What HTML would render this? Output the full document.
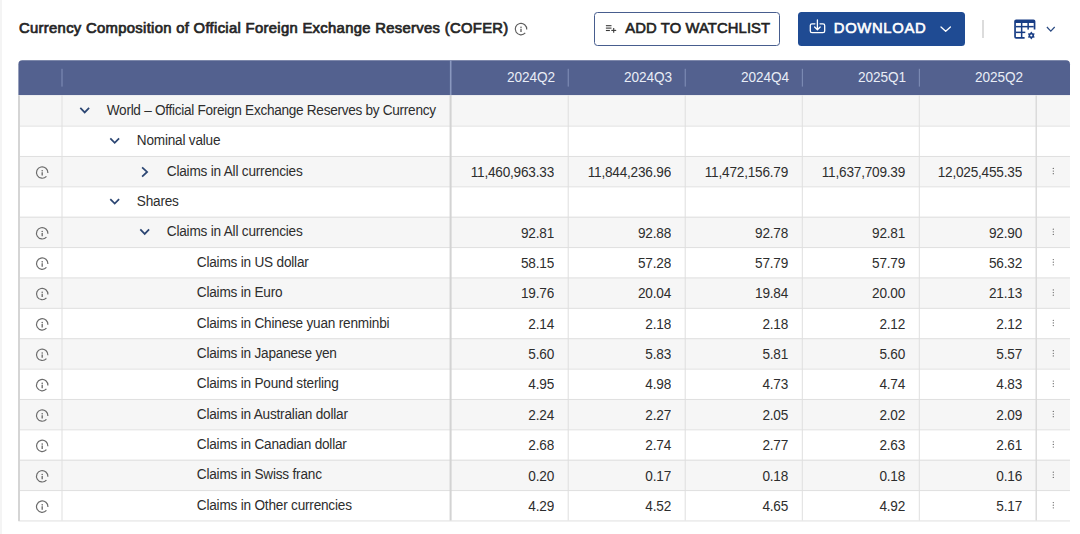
<!DOCTYPE html>
<html><head><meta charset="utf-8"><style>
*{margin:0;padding:0;box-sizing:border-box}
html,body{width:1080px;height:534px;overflow:hidden;background:#fff}
body{position:relative;font-family:"Liberation Sans",sans-serif;color:#2d2d2d}
.a{position:absolute}
.t{position:absolute;white-space:nowrap;font-size:13.6px;line-height:16px;letter-spacing:-0.2px}
.s{transform:scaleY(1.08);transform-origin:0 12.7px}
.num{text-align:right}
.hd{color:#e9edf6;font-size:13.6px;letter-spacing:-0.05px}
svg{position:absolute;overflow:visible}
</style></head>
<body>
<div class="a" style="left:0;top:0;width:1.5px;height:534px;background:#f4f4f4"></div>
<div class="t" style="left:19px;top:19.2px;font-size:14.8px;line-height:18px;font-weight:normal;-webkit-text-stroke:0.72px #262626;letter-spacing:0.32px;color:#262626">Currency Composition of Official Foreign Exchange Reserves (COFER)</div>
<svg style="left:0;top:0" width="1" height="1"><path d="M525.27 32.95 A5.75 5.75 0 1 1 526.74 29.50" fill="none" stroke="#5e5e5e" stroke-width="1.15"/><circle cx="521.0" cy="27.30" r="0.8" fill="#5e5e5e"/><line x1="521.0" y1="28.80" x2="521.0" y2="32.10" stroke="#5e5e5e" stroke-width="1.35"/></svg>
<div class="a" style="left:594px;top:12.1px;width:186.3px;height:34.3px;border:1.2px solid #475d8e;border-radius:3.5px;background:#fff"></div>
<svg style="left:0;top:0" width="1" height="1" stroke="#3a3a3a" stroke-width="1.1"><line x1="605.9" y1="25.7" x2="611.5" y2="25.7"/><line x1="605.9" y1="28.1" x2="611.5" y2="28.1"/><line x1="605.9" y1="30.5" x2="609.9" y2="30.5"/><line x1="611.3" y1="30.4" x2="616.2" y2="30.4"/><line x1="613.7" y1="27.9" x2="613.7" y2="32.8"/></svg>
<div class="t" style="left:625.3px;top:18.8px;font-size:14.8px;line-height:18px;font-weight:normal;-webkit-text-stroke:0.6px #222;letter-spacing:0.1px;color:#222">ADD TO WATCHLIST</div>
<div class="a" style="left:798px;top:12.1px;width:167px;height:34.2px;border-radius:3.5px;background:#1f4b93"></div>
<svg style="left:0;top:0" width="1" height="1" fill="none" stroke="#fff" stroke-width="1.3" stroke-linecap="round" stroke-linejoin="round"><path d="M814.9 23.8 H812 Q810.3 23.8 810.3 25.5 V31 Q810.3 32.7 812 32.7 H823 Q824.7 32.7 824.7 31 V25.5 Q824.7 23.8 823 23.8 H820"/><path d="M817.4 20 V29.5 M814.6 27 L817.4 29.8 L820.2 27"/><path d="M941 27 L945.7 31.3 L950.4 27"/></svg>
<div class="t" style="left:833.8px;top:18.9px;font-size:14.8px;line-height:18px;font-weight:normal;-webkit-text-stroke:0.6px #fff;letter-spacing:0.68px;color:#fff">DOWNLOAD</div>
<div class="a" style="left:982px;top:20px;width:1.5px;height:17.5px;background:#dcdcdc"></div>
<svg style="left:0;top:0" width="1" height="1" fill="#183d85"><path d="M1014.2 21.3 Q1014.2 19.4 1016.1 19.4 H1033.5 Q1035.4 19.4 1035.4 21.3 V29.6 H1033.7 V23.0 H1015.9 V37.0 H1024.6 V38.7 H1016.1 Q1014.2 38.7 1014.2 36.8 Z"/><rect x="1015.9" y="25.9" width="17.8" height="1.5"/><rect x="1015.9" y="31.6" width="9.4" height="1.5"/><rect x="1020.9" y="23" width="1.5" height="14.2"/><rect x="1027.4" y="23" width="1.5" height="6.6"/><polygon points="1031.30,31.60 1032.60,33.25 1034.68,33.55 1033.90,35.50 1034.68,37.45 1032.60,37.75 1031.30,39.40 1030.00,37.75 1027.92,37.45 1028.70,35.50 1027.92,33.55 1030.00,33.25"/><circle cx="1031.3" cy="35.5" r="1.1" fill="#fff"/></svg>
<svg style="left:0;top:0" width="1" height="1" fill="none" stroke="#2a4a82" stroke-width="1.2"><path d="M1046.9 27 L1050.8 31.2 L1054.7 27"/></svg>
<svg style="left:0;top:0" width="1080" height="534" shape-rendering="geometricPrecision"><path d="M18.4 95.3 V64.35 Q18.4 60.35 22.4 60.35 H1066.0 Q1070 60.35 1070 64.35 V95.3 Z" fill="#53618f"/><rect x="18.4" y="95.300" width="1051.6" height="30.375" fill="#f6f6f6"/><rect x="18.4" y="125.675" width="1051.6" height="30.375" fill="#ffffff"/><rect x="18.4" y="156.050" width="1051.6" height="30.375" fill="#f6f6f6"/><rect x="18.4" y="186.425" width="1051.6" height="30.375" fill="#ffffff"/><rect x="18.4" y="216.800" width="1051.6" height="30.375" fill="#f6f6f6"/><rect x="18.4" y="247.175" width="1051.6" height="30.375" fill="#ffffff"/><rect x="18.4" y="277.550" width="1051.6" height="30.375" fill="#f6f6f6"/><rect x="18.4" y="307.925" width="1051.6" height="30.375" fill="#ffffff"/><rect x="18.4" y="338.300" width="1051.6" height="30.375" fill="#f6f6f6"/><rect x="18.4" y="368.675" width="1051.6" height="30.375" fill="#ffffff"/><rect x="18.4" y="399.050" width="1051.6" height="30.375" fill="#f6f6f6"/><rect x="18.4" y="429.425" width="1051.6" height="30.375" fill="#ffffff"/><rect x="18.4" y="459.800" width="1051.6" height="30.375" fill="#f6f6f6"/><rect x="18.4" y="490.175" width="1051.6" height="30.375" fill="#ffffff"/><rect x="61.55" y="68.8" width="0.9" height="17.8" fill="#8896be"/><rect x="449.90" y="60.35" width="1.6" height="34.95" fill="#8a98bf"/><rect x="567.75" y="68.8" width="0.9" height="17.8" fill="#8896be"/><rect x="684.75" y="68.8" width="0.9" height="17.8" fill="#8896be"/><rect x="801.85" y="68.8" width="0.9" height="17.8" fill="#8896be"/><rect x="918.85" y="68.8" width="0.9" height="17.8" fill="#8896be"/><rect x="18.4" y="125.575" width="1051.6" height="1.0" fill="#dfdfdf"/><rect x="18.4" y="155.950" width="1051.6" height="1.0" fill="#dfdfdf"/><rect x="18.4" y="186.325" width="1051.6" height="1.0" fill="#dfdfdf"/><rect x="18.4" y="216.700" width="1051.6" height="1.0" fill="#dfdfdf"/><rect x="18.4" y="247.075" width="1051.6" height="1.0" fill="#dfdfdf"/><rect x="18.4" y="277.450" width="1051.6" height="1.0" fill="#dfdfdf"/><rect x="18.4" y="307.825" width="1051.6" height="1.0" fill="#dfdfdf"/><rect x="18.4" y="338.200" width="1051.6" height="1.0" fill="#dfdfdf"/><rect x="18.4" y="368.575" width="1051.6" height="1.0" fill="#dfdfdf"/><rect x="18.4" y="398.950" width="1051.6" height="1.0" fill="#dfdfdf"/><rect x="18.4" y="429.325" width="1051.6" height="1.0" fill="#dfdfdf"/><rect x="18.4" y="459.700" width="1051.6" height="1.0" fill="#dfdfdf"/><rect x="18.4" y="490.075" width="1051.6" height="1.0" fill="#dfdfdf"/><rect x="18.4" y="520.450" width="1051.6" height="1.0" fill="#dfdfdf"/><rect x="61.50" y="95.3" width="1.0" height="425.25" fill="#dfdfdf"/><rect x="567.70" y="95.3" width="1.0" height="425.25" fill="#dfdfdf"/><rect x="684.70" y="95.3" width="1.0" height="425.25" fill="#dfdfdf"/><rect x="801.80" y="95.3" width="1.0" height="425.25" fill="#dfdfdf"/><rect x="918.80" y="95.3" width="1.0" height="425.25" fill="#dfdfdf"/><rect x="1035.50" y="95.3" width="1.4" height="425.25" fill="#d9d9d9"/><rect x="449.60" y="95.3" width="2.0" height="425.25" fill="#d3d3d3"/><rect x="18.00" y="95.3" width="2.0" height="425.65" fill="#d5d5d5"/></svg>
<div class="t hd num s" style="left:455.0px;width:100px;top:70px">2024Q2</div>
<div class="t hd num s" style="left:572.0px;width:100px;top:70px">2024Q3</div>
<div class="t hd num s" style="left:689.0999999999999px;width:100px;top:70px">2024Q4</div>
<div class="t hd num s" style="left:806.0999999999999px;width:100px;top:70px">2025Q1</div>
<div class="t hd num s" style="left:923.0px;width:100px;top:70px">2025Q2</div>
<div class="t s" style="left:106.8px;top:102.90px;letter-spacing:-0.28px">World – Official Foreign Exchange Reserves by Currency</div>
<svg style="left:0;top:0" width="1" height="1" fill="none" stroke="#2c4673" stroke-width="1.75"><path d="M80.30 107.99 L84.70 112.39 L89.10 107.99"/></svg>
<div class="t s" style="left:136.8px;top:133.28px">Nominal value</div>
<svg style="left:0;top:0" width="1" height="1" fill="none" stroke="#2c4673" stroke-width="1.75"><path d="M110.30 138.36 L114.70 142.76 L119.10 138.36"/></svg>
<div class="t s" style="left:166.8px;top:163.65px">Claims in All currencies</div>
<svg style="left:0;top:0" width="1" height="1" fill="none" stroke="#2c4673" stroke-width="1.75"><path d="M142.10 167.34 L147.10 171.94 L142.10 176.54"/></svg>
<div class="t num s" style="left:434.0px;width:120px;top:164.75px">11,460,963.33</div>
<div class="t num s" style="left:551.0px;width:120px;top:164.75px">11,844,236.96</div>
<div class="t num s" style="left:668.0999999999999px;width:120px;top:164.75px">11,472,156.79</div>
<div class="t num s" style="left:785.0999999999999px;width:120px;top:164.75px">11,637,709.39</div>
<div class="t num s" style="left:902.0px;width:120px;top:164.75px">12,025,455.35</div>
<svg style="left:0;top:0" width="1" height="1"><path d="M46.44 176.35 A5.7 5.7 0 1 1 47.89 172.94" fill="none" stroke="#6b6b6b" stroke-width="1.2"/><circle cx="42.2" cy="170.74" r="0.8" fill="#6b6b6b"/><line x1="42.2" y1="172.24" x2="42.2" y2="175.54" stroke="#6b6b6b" stroke-width="1.35"/></svg>
<svg style="left:0;top:0" width="1" height="1" fill="#606060"><circle cx="1053.3" cy="168.44" r="0.64"/><circle cx="1053.3" cy="171.09" r="0.64"/><circle cx="1053.3" cy="173.69" r="0.64"/></svg>
<div class="t s" style="left:136.8px;top:194.03px">Shares</div>
<svg style="left:0;top:0" width="1" height="1" fill="none" stroke="#2c4673" stroke-width="1.75"><path d="M110.30 199.11 L114.70 203.51 L119.10 199.11"/></svg>
<div class="t s" style="left:166.8px;top:224.40px">Claims in All currencies</div>
<svg style="left:0;top:0" width="1" height="1" fill="none" stroke="#2c4673" stroke-width="1.75"><path d="M140.30 229.49 L144.70 233.89 L149.10 229.49"/></svg>
<div class="t num s" style="left:434.0px;width:120px;top:225.50px">92.81</div>
<div class="t num s" style="left:551.0px;width:120px;top:225.50px">92.88</div>
<div class="t num s" style="left:668.0999999999999px;width:120px;top:225.50px">92.78</div>
<div class="t num s" style="left:785.0999999999999px;width:120px;top:225.50px">92.81</div>
<div class="t num s" style="left:902.0px;width:120px;top:225.50px">92.90</div>
<svg style="left:0;top:0" width="1" height="1"><path d="M46.44 237.10 A5.7 5.7 0 1 1 47.89 233.69" fill="none" stroke="#6b6b6b" stroke-width="1.2"/><circle cx="42.2" cy="231.49" r="0.8" fill="#6b6b6b"/><line x1="42.2" y1="232.99" x2="42.2" y2="236.29" stroke="#6b6b6b" stroke-width="1.35"/></svg>
<svg style="left:0;top:0" width="1" height="1" fill="#606060"><circle cx="1053.3" cy="229.19" r="0.64"/><circle cx="1053.3" cy="231.84" r="0.64"/><circle cx="1053.3" cy="234.44" r="0.64"/></svg>
<div class="t s" style="left:196.8px;top:254.78px">Claims in US dollar</div>
<div class="t num s" style="left:434.0px;width:120px;top:255.88px">58.15</div>
<div class="t num s" style="left:551.0px;width:120px;top:255.88px">57.28</div>
<div class="t num s" style="left:668.0999999999999px;width:120px;top:255.88px">57.79</div>
<div class="t num s" style="left:785.0999999999999px;width:120px;top:255.88px">57.79</div>
<div class="t num s" style="left:902.0px;width:120px;top:255.88px">56.32</div>
<svg style="left:0;top:0" width="1" height="1"><path d="M46.44 267.47 A5.7 5.7 0 1 1 47.89 264.06" fill="none" stroke="#6b6b6b" stroke-width="1.2"/><circle cx="42.2" cy="261.86" r="0.8" fill="#6b6b6b"/><line x1="42.2" y1="263.36" x2="42.2" y2="266.66" stroke="#6b6b6b" stroke-width="1.35"/></svg>
<svg style="left:0;top:0" width="1" height="1" fill="#606060"><circle cx="1053.3" cy="259.56" r="0.64"/><circle cx="1053.3" cy="262.21" r="0.64"/><circle cx="1053.3" cy="264.81" r="0.64"/></svg>
<div class="t s" style="left:196.8px;top:285.15px">Claims in Euro</div>
<div class="t num s" style="left:434.0px;width:120px;top:286.25px">19.76</div>
<div class="t num s" style="left:551.0px;width:120px;top:286.25px">20.04</div>
<div class="t num s" style="left:668.0999999999999px;width:120px;top:286.25px">19.84</div>
<div class="t num s" style="left:785.0999999999999px;width:120px;top:286.25px">20.00</div>
<div class="t num s" style="left:902.0px;width:120px;top:286.25px">21.13</div>
<svg style="left:0;top:0" width="1" height="1"><path d="M46.44 297.85 A5.7 5.7 0 1 1 47.89 294.44" fill="none" stroke="#6b6b6b" stroke-width="1.2"/><circle cx="42.2" cy="292.24" r="0.8" fill="#6b6b6b"/><line x1="42.2" y1="293.74" x2="42.2" y2="297.04" stroke="#6b6b6b" stroke-width="1.35"/></svg>
<svg style="left:0;top:0" width="1" height="1" fill="#606060"><circle cx="1053.3" cy="289.94" r="0.64"/><circle cx="1053.3" cy="292.59" r="0.64"/><circle cx="1053.3" cy="295.19" r="0.64"/></svg>
<div class="t s" style="left:196.8px;top:315.53px">Claims in Chinese yuan renminbi</div>
<div class="t num s" style="left:434.0px;width:120px;top:316.62px">2.14</div>
<div class="t num s" style="left:551.0px;width:120px;top:316.62px">2.18</div>
<div class="t num s" style="left:668.0999999999999px;width:120px;top:316.62px">2.18</div>
<div class="t num s" style="left:785.0999999999999px;width:120px;top:316.62px">2.12</div>
<div class="t num s" style="left:902.0px;width:120px;top:316.62px">2.12</div>
<svg style="left:0;top:0" width="1" height="1"><path d="M46.44 328.22 A5.7 5.7 0 1 1 47.89 324.81" fill="none" stroke="#6b6b6b" stroke-width="1.2"/><circle cx="42.2" cy="322.61" r="0.8" fill="#6b6b6b"/><line x1="42.2" y1="324.11" x2="42.2" y2="327.41" stroke="#6b6b6b" stroke-width="1.35"/></svg>
<svg style="left:0;top:0" width="1" height="1" fill="#606060"><circle cx="1053.3" cy="320.31" r="0.64"/><circle cx="1053.3" cy="322.96" r="0.64"/><circle cx="1053.3" cy="325.56" r="0.64"/></svg>
<div class="t s" style="left:196.8px;top:345.90px">Claims in Japanese yen</div>
<div class="t num s" style="left:434.0px;width:120px;top:347.00px">5.60</div>
<div class="t num s" style="left:551.0px;width:120px;top:347.00px">5.83</div>
<div class="t num s" style="left:668.0999999999999px;width:120px;top:347.00px">5.81</div>
<div class="t num s" style="left:785.0999999999999px;width:120px;top:347.00px">5.60</div>
<div class="t num s" style="left:902.0px;width:120px;top:347.00px">5.57</div>
<svg style="left:0;top:0" width="1" height="1"><path d="M46.44 358.60 A5.7 5.7 0 1 1 47.89 355.19" fill="none" stroke="#6b6b6b" stroke-width="1.2"/><circle cx="42.2" cy="352.99" r="0.8" fill="#6b6b6b"/><line x1="42.2" y1="354.49" x2="42.2" y2="357.79" stroke="#6b6b6b" stroke-width="1.35"/></svg>
<svg style="left:0;top:0" width="1" height="1" fill="#606060"><circle cx="1053.3" cy="350.69" r="0.64"/><circle cx="1053.3" cy="353.34" r="0.64"/><circle cx="1053.3" cy="355.94" r="0.64"/></svg>
<div class="t s" style="left:196.8px;top:376.28px">Claims in Pound sterling</div>
<div class="t num s" style="left:434.0px;width:120px;top:377.38px">4.95</div>
<div class="t num s" style="left:551.0px;width:120px;top:377.38px">4.98</div>
<div class="t num s" style="left:668.0999999999999px;width:120px;top:377.38px">4.73</div>
<div class="t num s" style="left:785.0999999999999px;width:120px;top:377.38px">4.74</div>
<div class="t num s" style="left:902.0px;width:120px;top:377.38px">4.83</div>
<svg style="left:0;top:0" width="1" height="1"><path d="M46.44 388.97 A5.7 5.7 0 1 1 47.89 385.56" fill="none" stroke="#6b6b6b" stroke-width="1.2"/><circle cx="42.2" cy="383.36" r="0.8" fill="#6b6b6b"/><line x1="42.2" y1="384.86" x2="42.2" y2="388.16" stroke="#6b6b6b" stroke-width="1.35"/></svg>
<svg style="left:0;top:0" width="1" height="1" fill="#606060"><circle cx="1053.3" cy="381.06" r="0.64"/><circle cx="1053.3" cy="383.71" r="0.64"/><circle cx="1053.3" cy="386.31" r="0.64"/></svg>
<div class="t s" style="left:196.8px;top:406.65px">Claims in Australian dollar</div>
<div class="t num s" style="left:434.0px;width:120px;top:407.75px">2.24</div>
<div class="t num s" style="left:551.0px;width:120px;top:407.75px">2.27</div>
<div class="t num s" style="left:668.0999999999999px;width:120px;top:407.75px">2.05</div>
<div class="t num s" style="left:785.0999999999999px;width:120px;top:407.75px">2.02</div>
<div class="t num s" style="left:902.0px;width:120px;top:407.75px">2.09</div>
<svg style="left:0;top:0" width="1" height="1"><path d="M46.44 419.35 A5.7 5.7 0 1 1 47.89 415.94" fill="none" stroke="#6b6b6b" stroke-width="1.2"/><circle cx="42.2" cy="413.74" r="0.8" fill="#6b6b6b"/><line x1="42.2" y1="415.24" x2="42.2" y2="418.54" stroke="#6b6b6b" stroke-width="1.35"/></svg>
<svg style="left:0;top:0" width="1" height="1" fill="#606060"><circle cx="1053.3" cy="411.44" r="0.64"/><circle cx="1053.3" cy="414.09" r="0.64"/><circle cx="1053.3" cy="416.69" r="0.64"/></svg>
<div class="t s" style="left:196.8px;top:437.03px">Claims in Canadian dollar</div>
<div class="t num s" style="left:434.0px;width:120px;top:438.12px">2.68</div>
<div class="t num s" style="left:551.0px;width:120px;top:438.12px">2.74</div>
<div class="t num s" style="left:668.0999999999999px;width:120px;top:438.12px">2.77</div>
<div class="t num s" style="left:785.0999999999999px;width:120px;top:438.12px">2.63</div>
<div class="t num s" style="left:902.0px;width:120px;top:438.12px">2.61</div>
<svg style="left:0;top:0" width="1" height="1"><path d="M46.44 449.72 A5.7 5.7 0 1 1 47.89 446.31" fill="none" stroke="#6b6b6b" stroke-width="1.2"/><circle cx="42.2" cy="444.11" r="0.8" fill="#6b6b6b"/><line x1="42.2" y1="445.61" x2="42.2" y2="448.91" stroke="#6b6b6b" stroke-width="1.35"/></svg>
<svg style="left:0;top:0" width="1" height="1" fill="#606060"><circle cx="1053.3" cy="441.81" r="0.64"/><circle cx="1053.3" cy="444.46" r="0.64"/><circle cx="1053.3" cy="447.06" r="0.64"/></svg>
<div class="t s" style="left:196.8px;top:467.40px">Claims in Swiss franc</div>
<div class="t num s" style="left:434.0px;width:120px;top:468.50px">0.20</div>
<div class="t num s" style="left:551.0px;width:120px;top:468.50px">0.17</div>
<div class="t num s" style="left:668.0999999999999px;width:120px;top:468.50px">0.18</div>
<div class="t num s" style="left:785.0999999999999px;width:120px;top:468.50px">0.18</div>
<div class="t num s" style="left:902.0px;width:120px;top:468.50px">0.16</div>
<svg style="left:0;top:0" width="1" height="1"><path d="M46.44 480.10 A5.7 5.7 0 1 1 47.89 476.69" fill="none" stroke="#6b6b6b" stroke-width="1.2"/><circle cx="42.2" cy="474.49" r="0.8" fill="#6b6b6b"/><line x1="42.2" y1="475.99" x2="42.2" y2="479.29" stroke="#6b6b6b" stroke-width="1.35"/></svg>
<svg style="left:0;top:0" width="1" height="1" fill="#606060"><circle cx="1053.3" cy="472.19" r="0.64"/><circle cx="1053.3" cy="474.84" r="0.64"/><circle cx="1053.3" cy="477.44" r="0.64"/></svg>
<div class="t s" style="left:196.8px;top:497.78px">Claims in Other currencies</div>
<div class="t num s" style="left:434.0px;width:120px;top:498.88px">4.29</div>
<div class="t num s" style="left:551.0px;width:120px;top:498.88px">4.52</div>
<div class="t num s" style="left:668.0999999999999px;width:120px;top:498.88px">4.65</div>
<div class="t num s" style="left:785.0999999999999px;width:120px;top:498.88px">4.92</div>
<div class="t num s" style="left:902.0px;width:120px;top:498.88px">5.17</div>
<svg style="left:0;top:0" width="1" height="1"><path d="M46.44 510.47 A5.7 5.7 0 1 1 47.89 507.06" fill="none" stroke="#6b6b6b" stroke-width="1.2"/><circle cx="42.2" cy="504.86" r="0.8" fill="#6b6b6b"/><line x1="42.2" y1="506.36" x2="42.2" y2="509.66" stroke="#6b6b6b" stroke-width="1.35"/></svg>
<svg style="left:0;top:0" width="1" height="1" fill="#606060"><circle cx="1053.3" cy="502.56" r="0.64"/><circle cx="1053.3" cy="505.21" r="0.64"/><circle cx="1053.3" cy="507.81" r="0.64"/></svg>
</body></html>
